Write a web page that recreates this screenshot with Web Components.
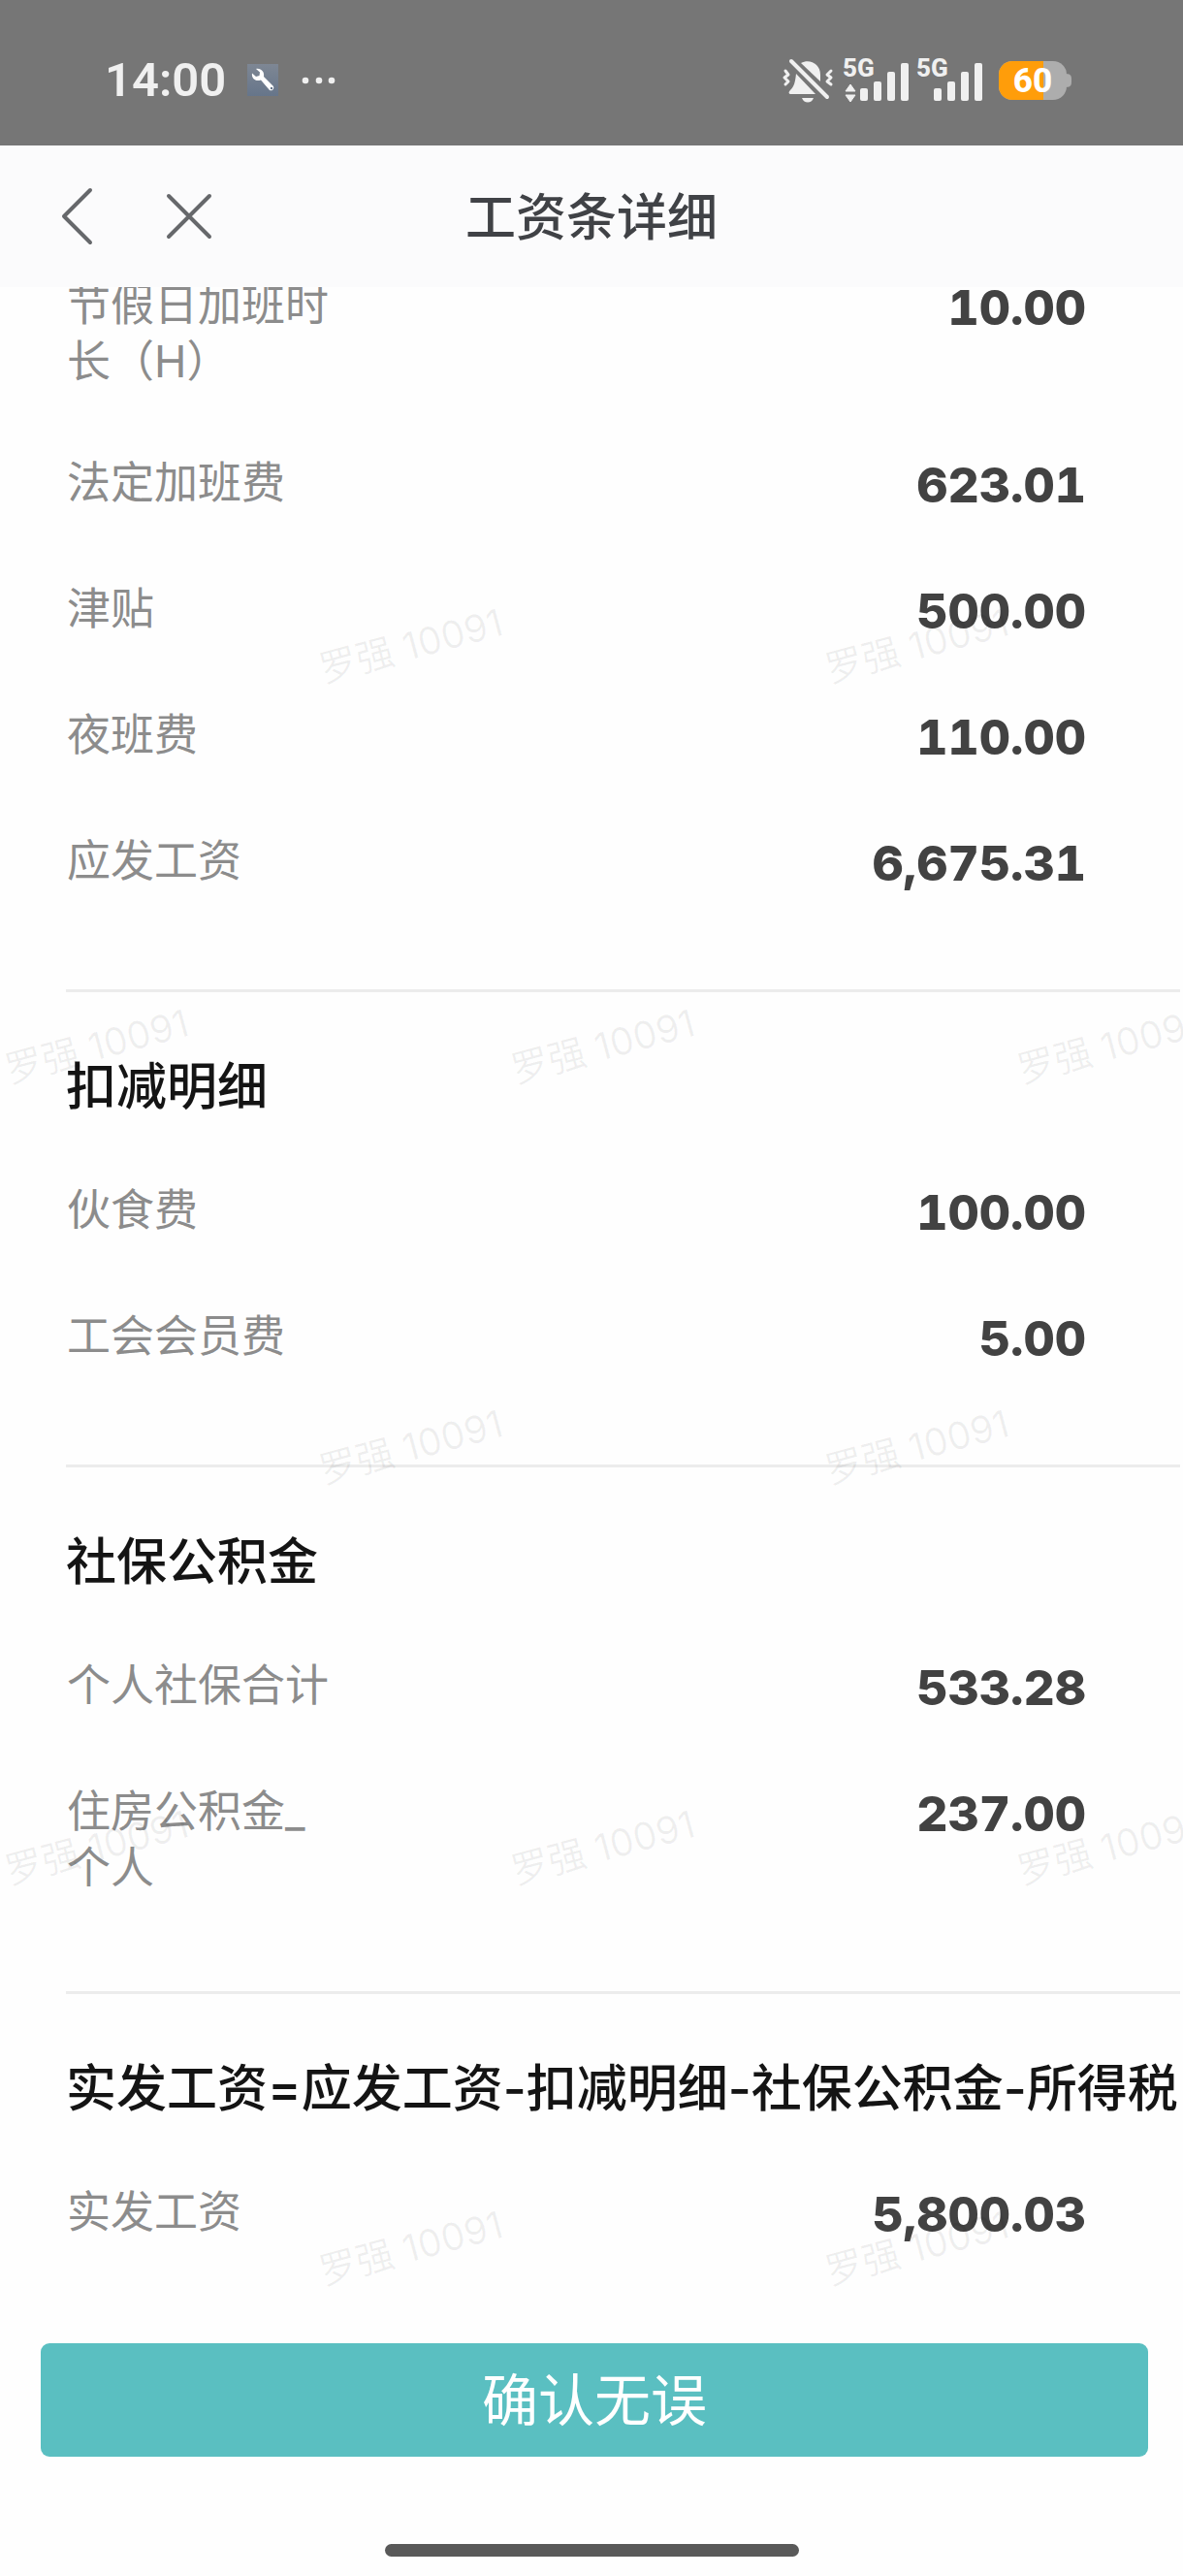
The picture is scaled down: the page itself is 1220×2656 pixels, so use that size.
<!DOCTYPE html>
<html lang="zh-CN">
<head>
<meta charset="UTF-8">
<meta name="viewport" content="width=device-width, initial-scale=1">
<title>工资条详细</title>
<style>
	body {
		margin: 0;
		background: #fefefe;
		font-family: Inter, "Noto Sans CJK SC", sans-serif;
	}
</style>
</head>
<body>
	<payslip-page>
		<status-bar slot="header" time="14:00" battery="60"></status-bar>
		<nav-bar slot="header">工资条详细</nav-bar>

		<pay-section>
			<pay-row amount="10.00">节假日加班时长（H）</pay-row>
			<pay-row amount="623.01">法定加班费</pay-row>
			<pay-row amount="500.00">津贴</pay-row>
			<pay-row amount="110.00">夜班费</pay-row>
			<pay-row amount="6,675.31">应发工资</pay-row>
		</pay-section>
		<pay-section heading="扣减明细">
			<pay-row amount="100.00">伙食费</pay-row>
			<pay-row amount="5.00">工会会员费</pay-row>
		</pay-section>
		<pay-section heading="社保公积金">
			<pay-row amount="533.28">个人社保合计</pay-row>
			<pay-row amount="237.00">住房公积金_个人</pay-row>
		</pay-section>
		<pay-section heading="实发工资=应发工资-扣减明细-社保公积金-所得税">
			<pay-row amount="5,800.03">实发工资</pay-row>
		</pay-section>

		<water-mark slot="overlay" text="罗强 10091"></water-mark>
		<confirm-bar slot="footer">确认无误</confirm-bar>
	</payslip-page>

<script>
class PayslipPage extends HTMLElement {

	constructor() {
		super();
		this.root = this.attachShadow({ mode: "open" });
	}

	connectedCallback() {
		this.root.innerHTML = this.render();
	}

	render() {
		return `
			<style>
				:host {
					display: flex;
					flex-direction: column;
					min-height: 100vh;
				}
				main {
					position: relative;
					flex: 1;
					overflow: hidden;
				}
				/* the list is scrolled a little under the title bar */
				.list {
					margin-top: -44px;
					padding: 0 3px 0 68px;
				}
			</style>
			<slot name="header"></slot>
			<main>
				<div class="list"><slot></slot></div>
				<slot name="overlay"></slot>
			</main>
			<slot name="footer"></slot>
		`;
	}

}

class StatusBar extends HTMLElement {

	constructor() {
		super();
		this.root = this.attachShadow({ mode: "open" });
	}

	connectedCallback() {
		this.root.innerHTML = this.render();
	}

	signal(x, active) {
		const arrows = active
			? `<path d="M2 35 L7 28 L12 35Z M2 39 H12 L7 46Z" stroke="#f0f0f0" stroke-width="1" stroke-linejoin="round"/>`
			: "";
		return `
			<svg width="68" height="48" viewBox="0 0 68 48" fill="#f0f0f0">
				<text x="-1" y="20" font-size="26" font-weight="800">5G</text>
				${arrows}
				<rect x="${x}" y="32" width="8" height="13" rx="2"/>
				<rect x="${x + 14}" y="25" width="8" height="20" rx="2"/>
				<rect x="${x + 28}" y="15" width="8" height="30" rx="2"/>
				<rect x="${x + 42}" y="6" width="8" height="39" rx="2"/>
			</svg>
		`;
	}

	render() {
		return `
			<style>
				:host {
					display: flex;
					align-items: center;
					justify-content: space-between;
					box-sizing: border-box;
					height: 150px;
					padding: 16px 115px 0 108px;
					background: #767676;
					color: #f0f0f0;
					font-family: Roboto, sans-serif;
				}
				.group {
					display: flex;
					align-items: center;
				}
				.time {
					font-size: 49px;
					line-height: 64px;
					font-weight: 600;
					margin-right: 22px;
				}
				.tool { margin-right: 24px; }
				.bell { margin-right: 10px; }
				.signals {
					display: flex;
					gap: 8px;
					margin-right: 16px;
				}
				svg {
					display: block;
					overflow: visible;
				}
			</style>
			<div class="group">
				<span class="time">${this.getAttribute("time")}</span>
				<svg class="tool" width="32" height="34" viewBox="0 0 32 34">
					<defs>
						<linearGradient id="tile" x1="0" y1="0" x2="0" y2="1">
							<stop offset="0" stop-color="#7e8794"/>
							<stop offset="1" stop-color="#66758a"/>
						</linearGradient>
					</defs>
					<rect width="32" height="33" fill="url(#tile)"/>
					<path d="M9 5 C14 4 18 8 17 13 L27 23 A3 3 0 0 1 23 27 L14 16.500 C9 18.500 4 15 5 9.500 L9 13 L12.500 12 L13 8.500 Z" fill="#fff"/>
					<circle cx="25" cy="25" r="1.200" fill="#66758a"/>
				</svg>
				<svg width="36" height="8" viewBox="0 0 36 8" fill="#f0f0f0">
					<circle cx="4" cy="4" r="3.300"/>
					<circle cx="18" cy="4" r="3.300"/>
					<circle cx="31" cy="4" r="3.300"/>
				</svg>
			</div>
			<div class="group">
				<svg class="bell" width="53" height="48" viewBox="0 0 53 48" fill="none" stroke="#f0f0f0" stroke-linecap="round" stroke-linejoin="round">
					<path d="M19 6 C28 1 39 7 39 18 V25 Z" fill="#f0f0f0" stroke="none"/>
					<path d="M14 17 L34 38 H9 C6 38 6 36 8 34 C12 30 13 26 14 17 Z" fill="#f0f0f0" stroke="none"/>
					<path d="M20 42 H32 C30 48 22 48 20 42 Z" fill="#f0f0f0" stroke="none"/>
					<path d="M9 4 L46 41" stroke-width="4"/>
					<path d="M3 14 L6 18 L2 21 L6 25 L3 28" stroke-width="3"/>
					<path d="M50 14 L46 18 L50 21 L46 25 L50 28" stroke-width="3"/>
				</svg>
				<div class="signals">
					${this.signal(17, true)}
					${this.signal(17, false)}
				</div>
				<svg width="75" height="42" viewBox="0 0 75 42">
					<path d="M69 14 C75 14 75 17 75 21 C75 25 75 28 69 28 Z" fill="#adadad"/>
					<rect x="0" y="1" width="70" height="40" rx="14" fill="#adadad"/>
					<path d="M14 1 H46 V41 H14 A14 14 0 0 1 0 27 V15 A14 14 0 0 1 14 1 Z" fill="#ff9d0a"/>
					<text x="35" y="33" font-size="35" font-weight="800" fill="#fff" text-anchor="middle">${this.getAttribute("battery")}</text>
				</svg>
			</div>
		`;
	}

}

class NavBar extends HTMLElement {

	constructor() {
		super();
		this.root = this.attachShadow({ mode: "open" });
	}

	connectedCallback() {
		this.root.innerHTML = this.render();
	}

	render() {
		return `
			<style>
				:host {
					display: grid;
					grid-template-columns: 1fr auto 1fr;
					align-items: center;
					height: 146px;
					padding: 0 48px;
					background: #fbfbfc;
					color: #404246;
				}
				.actions {
					display: flex;
					gap: 50px;
				}
				button {
					padding: 0;
					border: 0;
					background: none;
					color: #66686b;
				}
				svg { display: block; }
				h1 {
					margin: 0;
					padding-top: 3px;
					font-size: 52px;
					line-height: 64px;
					font-weight: 500;
				}
			</style>
			<div class="actions">
				<button type="button" aria-label="返回">
					<svg width="64" height="64" viewBox="0 0 64 64" fill="none" stroke="currentColor" stroke-width="4" stroke-linecap="round" stroke-linejoin="round">
						<path d="M45 5 L18 32 L45 59"/>
					</svg>
				</button>
				<button type="button" aria-label="关闭">
					<svg width="64" height="64" viewBox="0 0 64 64" fill="none" stroke="currentColor" stroke-width="4" stroke-linecap="round">
						<path d="M12 11 L54 53 M54 11 L12 53"/>
					</svg>
				</button>
			</div>
			<h1><slot></slot></h1>
		`;
	}

}

class PaySection extends HTMLElement {

	constructor() {
		super();
		this.root = this.attachShadow({ mode: "open" });
	}

	connectedCallback() {
		this.root.innerHTML = this.render();
	}

	render() {
		const heading = this.getAttribute("heading");

		return `
			<style>
				:host {
					display: block;
					padding-bottom: 65px;
					border-bottom: 3px solid #ececec;
				}
				:host(:last-of-type) { border-bottom: 0; }
				h2 {
					margin: 0;
					padding: 66px 0 32px;
					color: #141414;
					font-size: 52px;
					line-height: 64px;
					font-weight: 500;
					white-space: nowrap;
				}
			</style>
			${heading ? `<h2>${heading}</h2>` : ""}
			<slot></slot>
		`;
	}

}

class PayRow extends HTMLElement {

	constructor() {
		super();
		this.root = this.attachShadow({ mode: "open" });
	}

	connectedCallback() {
		this.root.innerHTML = this.render();
	}

	render() {
		return `
			<style>
				:host {
					display: flex;
					justify-content: space-between;
					align-items: flex-start;
					padding: 33px 97px 33px 0;
				}
				.label {
					width: 280px;
					padding: 1px 0 0 1px;
					color: #8c8c8c;
					font-size: 45px;
					line-height: 58px;
				}
				.amount {
					color: #424242;
					font-size: 50px;
					line-height: 64px;
					font-weight: 800;
					font-variant-numeric: tabular-nums;
				}
			</style>
			<span class="label"><slot></slot></span>
			<span class="amount">${this.getAttribute("amount")}</span>
		`;
	}

}

class WaterMark extends HTMLElement {

	constructor() {
		super();
		this.root = this.attachShadow({ mode: "open" });
	}

	connectedCallback() {
		this.root.innerHTML = this.render();
	}

	render() {
		const mark = `<span>${this.getAttribute("text")}</span>`;
		const wide = `<div class="line">${mark.repeat(3)}</div>`;
		const shifted = `<div class="line shifted">${mark.repeat(2)}</div>`;

		return `
			<style>
				:host {
					position: absolute;
					inset: 0;
					overflow: hidden;
					padding-top: 160px;
					pointer-events: none;
					color: rgba(0, 0, 0, .06);
					font-size: 39px;
				}
				.line {
					display: flex;
					align-items: center;
					height: 413px;
					padding-left: 2px;
				}
				.shifted { padding-left: 326px; }
				span {
					flex: none;
					width: 192px;
					margin-right: 330px;
					white-space: nowrap;
					transform: rotate(-15deg);
				}
			</style>
			${shifted}${wide}${shifted}${wide}${shifted}
		`;
	}

}

class ConfirmBar extends HTMLElement {

	constructor() {
		super();
		this.root = this.attachShadow({ mode: "open" });
	}

	connectedCallback() {
		this.root.innerHTML = this.render();
	}

	render() {
		return `
			<style>
				:host {
					display: flex;
					flex-direction: column;
					gap: 90px;
					padding-bottom: 20px;
				}
				button {
					height: 117px;
					margin: 0 36px 0 42px;
					padding: 0;
					border: 0;
					border-radius: 9px;
					background: #5abfc1;
					color: #fff;
					font-family: inherit;
					font-size: 58px;
					line-height: 64px;
				}
				.home {
					align-self: center;
					width: 35%;
					height: 13px;
					border-radius: 7px;
					background: #595959;
				}
			</style>
			<button type="button"><slot></slot></button>
			<div class="home"></div>
		`;
	}

}

window.customElements.define("payslip-page", PayslipPage);
window.customElements.define("status-bar", StatusBar);
window.customElements.define("nav-bar", NavBar);
window.customElements.define("pay-section", PaySection);
window.customElements.define("pay-row", PayRow);
window.customElements.define("water-mark", WaterMark);
window.customElements.define("confirm-bar", ConfirmBar);
</script>
</body>
</html>
